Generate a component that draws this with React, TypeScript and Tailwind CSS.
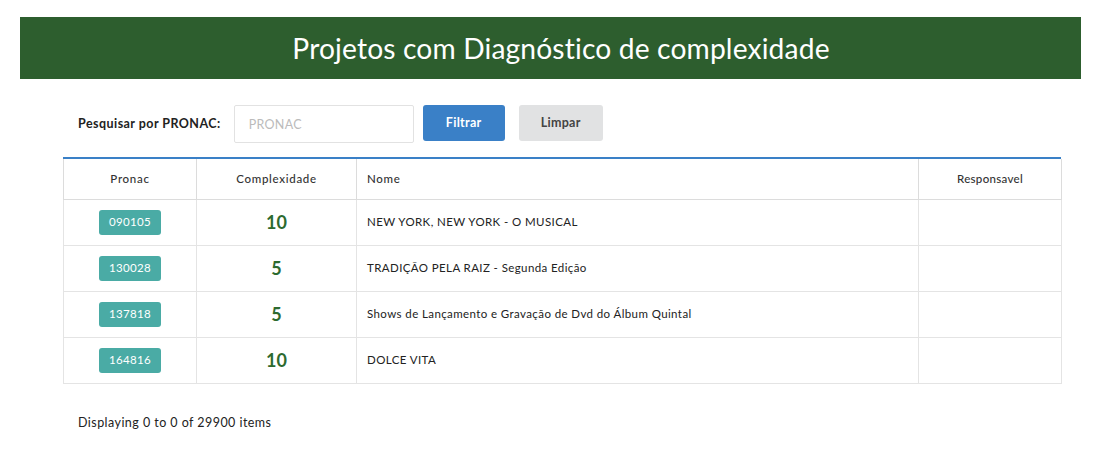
import React from "react";

const rows = [
  { pronac: "090105", complexidade: 10, nome: "NEW YORK, NEW YORK - O MUSICAL" },
  { pronac: "130028", complexidade: 5, nome: "TRADIÇÃO PELA RAIZ - Segunda Edição" },
  { pronac: "137818", complexidade: 5, nome: "Shows de Lançamento e Gravação de Dvd do Álbum Quintal" },
  { pronac: "164816", complexidade: 10, nome: "DOLCE VITA" },
];

const App = () => {
  return (
    <div className="w-[1102px] h-[458px] bg-white font-['Lato','Open_Sans',sans-serif] text-[#333]">
      <div className="pt-[17px] pl-[20px] pr-[21px]">
        <div className="h-[62px] bg-[#2d5e2e] flex items-center justify-center pl-[21px]">
          <h1 className="text-white text-[28.2px] leading-none tracking-[0.15px]">
            Projetos com Diagnóstico de complexidade
          </h1>
        </div>
      </div>

      <div className="flex items-center pl-[78px] mt-[26px] h-[38px]">
        <span className="text-[12.5px] tracking-[0.45px] font-bold text-[#222] mr-[13px]">Pesquisar por PRONAC:</span>
        <input
          className="w-[180px] h-[38px] border border-[#e2e2e2] rounded-[2px] px-[14px] text-[12.5px] tracking-[0.3px] placeholder-[#bbb] outline-none"
          placeholder="PRONAC"
        />
        <button className="ml-[9px] w-[82px] h-[36px] -mt-[2px] bg-[#3a80c7] rounded-[3px] text-white text-[12.5px] tracking-[0.3px] font-bold">
          Filtrar
        </button>
        <button className="ml-[14px] w-[84px] h-[36px] -mt-[2px] bg-[#e1e2e3] rounded-[3px] text-[#444] text-[12.5px] tracking-[0.3px] font-bold">
          Limpar
        </button>
      </div>

      <div className="ml-[63px] mt-[14px] w-[998px] border-t-[2px] border-[#3a80c7]">
        <table className="w-full table-fixed border-collapse text-[11.5px]">
          <colgroup>
            <col className="w-[133px]" />
            <col className="w-[160px]" />
            <col className="w-[562px]" />
            <col className="w-[143px]" />
          </colgroup>
          <thead>
            <tr className="h-[40px] tracking-[0.7px]">
              <th className="border border-t-0 border-[#dcdcdc] font-medium text-center">Pronac</th>
              <th className="border border-t-0 border-[#dcdcdc] font-medium text-center">Complexidade</th>
              <th className="border border-t-0 border-[#dcdcdc] font-medium text-left pl-[10px]">Nome</th>
              <th className="border border-t-0 border-[#dcdcdc] font-medium text-center tracking-[0.3px]">Responsavel</th>
            </tr>
          </thead>
          <tbody>
            {rows.map((r) => (
              <tr key={r.pronac} className="h-[46px]">
                <td className="border border-[#e4e4e4] text-center">
                  <span className="inline-flex items-center justify-center w-[62px] h-[25px] rounded-[3px] bg-[#4aaba5] text-white text-[11.5px] tracking-[0.3px]">
                    {r.pronac}
                  </span>
                </td>
                <td className="border border-[#e4e4e4] text-center text-[18px] font-bold text-[#2d6a2f]">
                  {r.complexidade}
                </td>
                <td className="border border-[#e4e4e4] pl-[10px] text-[11.5px] tracking-[0.4px] text-[#222]">{r.nome}</td>
                <td className="border border-[#e4e4e4]"></td>
              </tr>
            ))}
          </tbody>
        </table>
      </div>

      <div className="pl-[78px] mt-[30px] text-[12.5px] tracking-[0.45px] text-[#222]">Displaying 0 to 0 of 29900 items</div>
    </div>
  );
};

export default App;
